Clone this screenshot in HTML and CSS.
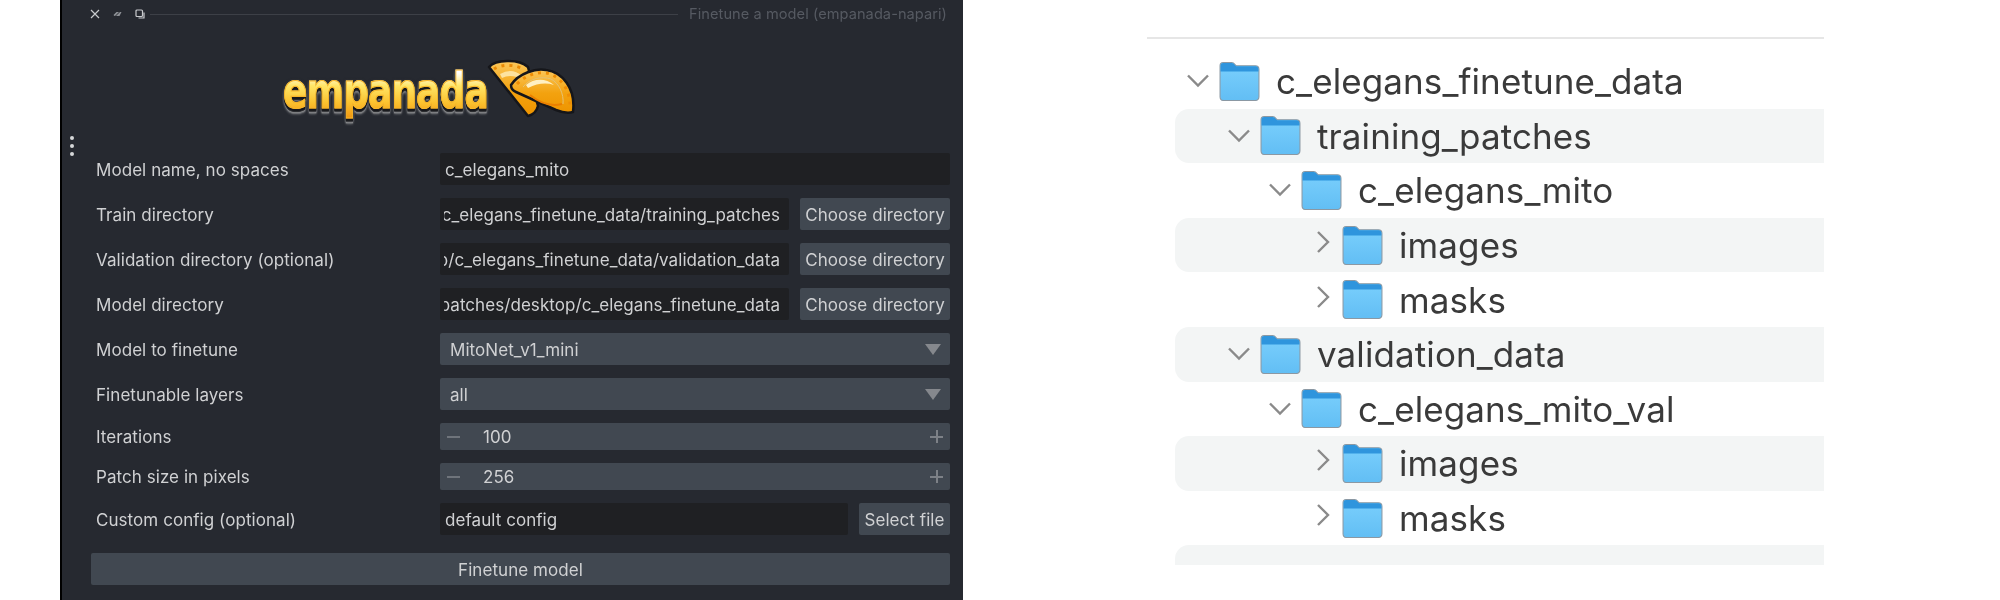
FILE: index.html
```html
<!DOCTYPE html>
<html lang="en">
<head>
<meta charset="utf-8">
<title>Finetune a model</title>
<link rel="stylesheet" href="styles.css">
</head>
<body>
<svg class="defs" width="0" height="0" aria-hidden="true">
  <defs>
    <linearGradient id="fbody" x1="0" y1="0" x2="0" y2="1">
      <stop offset="0" stop-color="#7bd0fd"/>
      <stop offset="1" stop-color="#62bef4"/>
    </linearGradient>
    <linearGradient id="dough" x1="0" y1="0" x2="0" y2="1">
      <stop offset="0" stop-color="#fbc75a"/>
      <stop offset=".55" stop-color="#f3a20f"/>
      <stop offset="1" stop-color="#ee9400"/>
    </linearGradient>
    <symbol id="folder" viewBox="1 1 39.500 37.500">
      <path d="M2 4.500Q2 1.500 5 1.500H13Q15 1.500 16.500 3.500L17.500 4.500H36Q39.500 4.500 39.500 8V34.500Q39.500 38 36 38H5Q2 38 2 34.500Z" fill="url(#fbody)" stroke="#8b98a3" stroke-width="1"/>
      <path d="M2.500 4.500Q2.500 2 5 2H13Q15 2 16.500 4L17.500 5H36Q39 5 39 8V10H2.500Z" fill="#2f95dd"/>
    </symbol>
    <symbol id="down" viewBox="0 0 26 18">
      <path d="M3 3.500 13 13.500 23 3.500" fill="none" stroke="#8a8a8a" stroke-width="2.400"/>
    </symbol>
    <symbol id="right" viewBox="0 0 26 24">
      <path d="M10 2 20 12 10 22" fill="none" stroke="#8a8a8a" stroke-width="2.400"/>
    </symbol>
  </defs>
</svg>
<main class="page">
  <section class="panel">
    <span class="handle" aria-hidden="true"><i></i><i></i><i></i></span>
    <header class="titlebar">
      <svg class="tb-icon" viewBox="0 0 10 10"><path d="M1 1 9 9M9 1 1 9" stroke="#c8cacd" stroke-width="1.200"/></svg>
      <svg class="tb-icon wide" viewBox="0 0 10 10"><path d="M1 6 4 3H9L7 7H2Z" fill="#8e9196"/><path d="M2 8 8 2" stroke="#26292f" stroke-width="1"/></svg>
      <svg class="tb-icon" viewBox="0 0 10 10"><rect x="1" y="1" width="6.500" height="6.500" rx="1" fill="none" stroke="#c8cacd" stroke-width="1.200"/><path d="M3.500 9H9V3.500" fill="none" stroke="#c8cacd" stroke-width="1.200"/></svg>
      <span class="tb-line"></span>
      <span class="tb-title">Finetune a model (empanada-napari)</span>
    </header>
    <div class="logo">
      <span class="logo-text">empanada</span>
      <svg class="logo-mark" viewBox="0 0 90 60">
        <path d="M3 9C9 2 32 0 42 9L52 48Q50 56 42 58Z" fill="url(#dough)" stroke="#15161a" stroke-width="2.500" stroke-linejoin="round"/>
        <path d="M8 11C16 6 30 6 38 12" fill="none" stroke="#e98a05" stroke-width="3" stroke-dasharray="3 5"/>
        <path d="M14 16Q26 9 36 18L38 22Q25 15 16 20Z" fill="#fde3a0"/>
        <path d="M25 27C33 15 50 10 60 12C76 14 90 30 87 54Q80 56 70 52L30 34Q25 32 25 27Z" fill="url(#dough)" stroke="#15161a" stroke-width="2.500" stroke-linejoin="round"/>
        <path d="M31 26C40 17 50 14 60 15C73 17 85 31 84 50" fill="none" stroke="#ee8d05" stroke-width="3" stroke-dasharray="3 5"/>
        <path d="M37 29C44 20 56 18 65 21C73 25 78 36 77 46" fill="none" stroke="#e4c276" stroke-width="1"/>
        <path d="M40 27C48 20 60 20 68 27Q56 23 42 30Z" fill="#fff0c4"/>
        <path d="M44 37Q60 50 76 46" fill="none" stroke="#ea7f00" stroke-width="2"/>
      </svg>
    </div>
    <form class="form">
      <div class="row">
        <label class="label">Model name, no spaces</label>
        <div class="field input"><span class="clip">c_elegans_mito</span></div>
      </div>
      <div class="row">
        <label class="label">Train directory</label>
        <div class="field split">
          <div class="input path"><span class="clip">c_elegans_finetune_data/training_patches</span></div>
          <button class="btn dir" type="button">Choose directory</button>
        </div>
      </div>
      <div class="row">
        <label class="label">Validation directory (optional)</label>
        <div class="field split">
          <div class="input path"><span class="clip">desktop/c_elegans_finetune_data/validation_data</span></div>
          <button class="btn dir" type="button">Choose directory</button>
        </div>
      </div>
      <div class="row">
        <label class="label">Model directory</label>
        <div class="field split">
          <div class="input path"><span class="clip">patches/desktop/c_elegans_finetune_data</span></div>
          <button class="btn dir" type="button">Choose directory</button>
        </div>
      </div>
      <div class="row">
        <label class="label">Model to finetune</label>
        <div class="field combo"><span>MitoNet_v1_mini</span><i class="tri"></i></div>
      </div>
      <div class="row">
        <label class="label">Finetunable layers</label>
        <div class="field combo"><span>all</span><i class="tri"></i></div>
      </div>
      <div class="row short">
        <label class="label">Iterations</label>
        <div class="field spin"><i class="minus"></i><span class="num">100</span><i class="plus"></i></div>
      </div>
      <div class="row short">
        <label class="label">Patch size in pixels</label>
        <div class="field spin"><i class="minus"></i><span class="num">256</span><i class="plus"></i></div>
      </div>
      <div class="row">
        <label class="label">Custom config (optional)</label>
        <div class="field split">
          <div class="input"><span class="clip">default config</span></div>
          <button class="btn file" type="button">Select file</button>
        </div>
      </div>
      <button class="btn run" type="button">Finetune model</button>
    </form>
  </section>

  <section class="tree">
    <div class="tree-rule"></div>
    <div class="t-row l0"><svg class="chev"><use href="#down"/></svg><svg class="fold"><use href="#folder"/></svg><span>c_elegans_finetune_data</span></div>
    <div class="t-row l1 alt"><svg class="chev"><use href="#down"/></svg><svg class="fold"><use href="#folder"/></svg><span>training_patches</span></div>
    <div class="t-row l2"><svg class="chev"><use href="#down"/></svg><svg class="fold"><use href="#folder"/></svg><span>c_elegans_mito</span></div>
    <div class="t-row l3 alt"><svg class="chev side"><use href="#right"/></svg><svg class="fold"><use href="#folder"/></svg><span>images</span></div>
    <div class="t-row l3"><svg class="chev side"><use href="#right"/></svg><svg class="fold"><use href="#folder"/></svg><span>masks</span></div>
    <div class="t-row l1 alt"><svg class="chev"><use href="#down"/></svg><svg class="fold"><use href="#folder"/></svg><span>validation_data</span></div>
    <div class="t-row l2"><svg class="chev"><use href="#down"/></svg><svg class="fold"><use href="#folder"/></svg><span>c_elegans_mito_val</span></div>
    <div class="t-row l3 alt"><svg class="chev side"><use href="#right"/></svg><svg class="fold"><use href="#folder"/></svg><span>images</span></div>
    <div class="t-row l3"><svg class="chev side"><use href="#right"/></svg><svg class="fold"><use href="#folder"/></svg><span>masks</span></div>
    <div class="t-row alt"></div>
  </section>
</main>
</body>
</html>
```
FILE: styles.css
```css
* { box-sizing: border-box; }
html, body { margin: 0; padding: 0; background: #fff; }
.defs { position: absolute; }
.page {
  width: 2000px;
  height: 600px;
  overflow: hidden;
  display: flex;
  align-items: flex-start;
  font-family: Inter, "Liberation Sans", sans-serif;
}

/* left: napari panel */
.panel {
  position: relative;
  margin-left: 60px;
  width: 903px;
  height: 600px;
  flex: none;
  background: #262930;
  border-left: 2px solid #000;
  padding: 0 13px 0 29px;
  color: #d0d1d3;
  font-size: 17px;
  letter-spacing: .060px;
  filter: blur(.45px);
}
.handle {
  position: absolute;
  left: 8px;
  top: 136px;
  display: flex;
  flex-direction: column;
  gap: 4px;
}
.handle i { width: 4px; height: 4px; border-radius: 50%; background: #d6d7d9; }
.titlebar {
  height: 28px;
  display: flex;
  align-items: center;
  margin-left: -1px;
}
.tb-icon { width: 10px; height: 10px; margin-right: 12px; flex: none; }
.tb-icon.wide { width: 11px; }
.tb-line { flex: 1; height: 1px; background: #3d4047; margin: 0 11px 0 -7px; }
.tb-title { color: #565a62; font-size: 14.600px; margin-right: 3px; white-space: nowrap; }
.logo {
  height: 125px;
  display: flex;
  align-items: flex-start;
  margin-left: 192px;
}
.logo-text {
  font-family: "DejaVu Sans", sans-serif;
  font-weight: 700;
  font-size: 36px;
  line-height: 46px;
  letter-spacing: -.900px;
  margin: 45px -3px 0 0;
  width: 206px;
  flex: none;
  transform: scaleY(1.4);
  transform-origin: 50% 35.400px;
  background: linear-gradient(180deg, #fff 0, #fff 22%, #ffe566 42%, #fbc22f 68%, #f29a14 90%);
  -webkit-background-clip: text;
  background-clip: text;
  color: transparent;
  -webkit-text-stroke: .8px #f7b52a;
  filter: drop-shadow(0 0 1px #17181c) drop-shadow(0 2px 0 #17181c) drop-shadow(0 1.500px 0 #b9babb);
}
.logo-mark { width: 90px; height: 60px; margin-top: 30px; flex: none; }
.form { display: flex; flex-direction: column; gap: 13px; }
.row { display: flex; height: 32px; align-items: center; }
.row.short { height: 27px; }
.label { width: 349px; padding: 2px 0 0 5px; flex: none; white-space: nowrap; }
.short .label { padding-top: 0; }
.field { flex: 1; min-width: 0; height: 100%; display: flex; align-items: center; }
.input {
  background: #1f2023;
  border-radius: 2px;
  padding: 2px 9px 0 5px;
  height: 100%;
  display: flex;
  align-items: center;
  min-width: 0;
  flex: 1;
}
.input.path { padding-left: 4px; }
.clip { white-space: nowrap; overflow: hidden; display: flex; min-width: 0; flex: 1; }
.path .clip { justify-content: flex-end; }
.split { gap: 11px; }
.btn {
  font: inherit;
  letter-spacing: inherit;
  color: inherit;
  background: #414851;
  border: 0;
  border-radius: 2px;
  height: 100%;
  padding: 2px 0 0;
  white-space: nowrap;
  flex: none;
}
.btn.dir { width: 150px; }
.btn.file { width: 91px; }
.btn.run { height: 32px; margin-top: 5px; width: 100%; }
.combo {
  background: #414851;
  border-radius: 2px;
  padding: 2px 9px 0 10px;
  justify-content: space-between;
}
.tri {
  width: 0;
  height: 0;
  margin-top: -2px;
  border-left: 8.500px solid transparent;
  border-right: 8.500px solid transparent;
  border-top: 11px solid #85888d;
}
.spin {
  background: #414851;
  border-radius: 2px;
  padding: 0 7px;
}
.minus { width: 13px; height: 2px; background: #6f747b; flex: none; }
.num { margin-left: 23px; flex: 1; }
.plus {
  width: 13px;
  height: 13px;
  flex: none;
  background:
    linear-gradient(#7d8187, #7d8187) center / 13px 2px no-repeat,
    linear-gradient(#7d8187, #7d8187) center / 2px 13px no-repeat;
}

/* right: finder tree */
.tree {
  margin: 37px 0 0 184px;
  width: 677px;
  height: 528px;
  overflow: hidden;
  flex: none;
  color: #3a3a3a;
  font-size: 35px;
  letter-spacing: .100px;
  filter: blur(.7px);
}
.tree-rule { height: 2px; background: #e6e6e6; margin-bottom: 15px; }
.t-row {
  height: 54.600px;
  margin-left: 28px;
  display: flex;
  align-items: center;
  border-radius: 14px 0 0 14px;
  white-space: nowrap;
}
.t-row.alt { background: #f3f5f5; }
.l0 { padding-left: 10px; }
.l1 { padding-left: 51px; }
.l2 { padding-left: 92px; }
.l3 { padding-left: 133px; }
.chev { width: 26px; height: 18px; margin-right: 8px; flex: none; }
.chev.side { height: 24px; margin-top: -6px; }
.fold { width: 41px; height: 39px; margin-right: 16px; flex: none; }
```
